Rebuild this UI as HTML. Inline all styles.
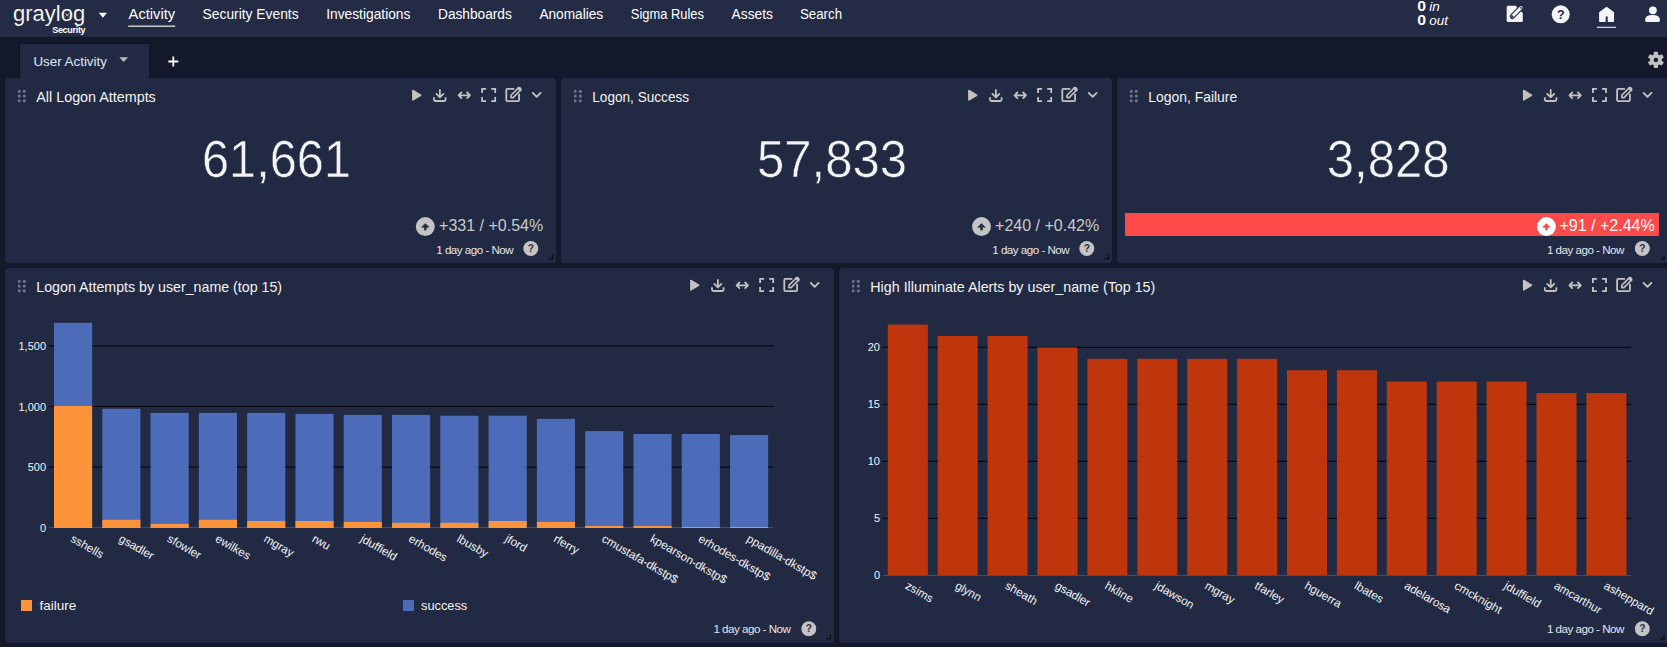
<!DOCTYPE html>
<html><head><meta charset="utf-8">
<style>
*{margin:0;padding:0}
html,body{width:1667px;height:647px;overflow:hidden;background:#13182a;font-family:"Liberation Sans",sans-serif}
svg{position:absolute;left:0;top:0;display:block}
</style></head><body>
<svg width="1667" height="647" viewBox="0 0 1667 647" font-family="Liberation Sans">
<defs>
<symbol id="hdr" viewBox="0 0 146 20" overflow="visible">
<g fill="none" stroke="#c2c2c2" stroke-width="1.8" stroke-linecap="round" stroke-linejoin="round">
<path d="M2.9 6.5 L10.6 11.2 L2.9 15.9 Z" fill="#c2c2c2" stroke-width="1.6"/>
<path d="M29.9 6 V13.2 M26.4 9.9 L29.9 13.4 L33.4 9.9"/>
<path d="M24 13.2 V15.6 Q24 17 25.4 17 H34.2 Q35.6 17 35.6 15.6 V13.2" stroke-linecap="butt"/>
<path d="M48.6 11.3 H60 M51.4 8.5 L48.6 11.3 L51.4 14.1 M57.2 8.5 L60 11.3 L57.2 14.1"/>
<path d="M72.1 9 V4.9 H76.1 M81.2 4.9 H85.2 V9 M85.2 13.1 V17.2 H81.2 M76.1 17.2 H72.1 V13.1" stroke-linecap="butt" stroke-linejoin="miter"/>
<path d="M103.5 4.9 H97.4 Q96.3 4.9 96.3 6 V16.1 Q96.3 17.2 97.4 17.2 H108 Q109.1 17.2 109.1 16.1 V10.5"/>
<path d="M101 13.6 V11.3 L108.2 4.1 Q109.3 3.1 110.3 4.1 Q111.3 5.1 110.3 6.2 L103.2 13.6 Z" stroke-width="1.6"/>
<path d="M108.5 4.1 L110.4 6" stroke-width="2.6"/>
<path d="M122.8 8.9 L126.7 12.8 L130.6 8.9" stroke-width="1.9"/>
</g>
</symbol>
<symbol id="dots" viewBox="0 0 10 14">
<g fill="#6c7288"><circle cx="1.3" cy="1.6" r="1.65"/><circle cx="6.5" cy="1.6" r="1.65"/><circle cx="1.3" cy="6.4" r="1.65"/><circle cx="6.5" cy="6.4" r="1.65"/><circle cx="1.3" cy="11.1" r="1.65"/><circle cx="6.5" cy="11.1" r="1.65"/></g>
</symbol>
<symbol id="help" viewBox="0 0 16 16">
<circle cx="8" cy="8" r="7.5" fill="#c4c4c4"/>
<text x="8" y="11.7" font-size="10.2" font-weight="bold" fill="#2a2f44" text-anchor="middle" font-family="Liberation Sans">?</text>
</symbol>
</defs>
<rect x="0" y="0" width="1667" height="647" fill="#13182a"/>
<rect x="0" y="0" width="1667" height="37" fill="#232b45"/>
<rect x="0" y="37" width="1667" height="1" fill="#131520"/>
<text x="13" y="20.8" font-size="22" fill="#ffffff" text-anchor="start" stroke="#232b45" stroke-width="0.15">graylog</text>
<path d="M66 13.8 L68.4 16.2 M68.4 13.8 L66 16.2" stroke="#e8e8ee" stroke-width="0.8" stroke-linecap="round"/>
<text x="52.2" y="33" font-size="9" fill="#ffffff" text-anchor="start" font-weight="bold" letter-spacing="-0.3">Security</text>
<path d="M98.8 12.8 H107 L102.9 17.8 Z" fill="#ffffff"/>
<text x="128.6" y="19.2" font-size="14" fill="#ffffff" text-anchor="start" textLength="46.6" lengthAdjust="spacingAndGlyphs">Activity</text>
<text x="202.6" y="19.2" font-size="14" fill="#ffffff" text-anchor="start" textLength="96" lengthAdjust="spacingAndGlyphs">Security Events</text>
<text x="326.2" y="19.2" font-size="14" fill="#ffffff" text-anchor="start" textLength="84.2" lengthAdjust="spacingAndGlyphs">Investigations</text>
<text x="438" y="19.2" font-size="14" fill="#ffffff" text-anchor="start" textLength="73.8" lengthAdjust="spacingAndGlyphs">Dashboards</text>
<text x="539.4" y="19.2" font-size="14" fill="#ffffff" text-anchor="start" textLength="63.8" lengthAdjust="spacingAndGlyphs">Anomalies</text>
<text x="630.8" y="19.2" font-size="14" fill="#ffffff" text-anchor="start" textLength="73.2" lengthAdjust="spacingAndGlyphs">Sigma Rules</text>
<text x="731.6" y="19.2" font-size="14" fill="#ffffff" text-anchor="start" textLength="41.4" lengthAdjust="spacingAndGlyphs">Assets</text>
<text x="800" y="19.2" font-size="14" fill="#ffffff" text-anchor="start" textLength="42" lengthAdjust="spacingAndGlyphs">Search</text>
<rect x="128.2" y="25.5" width="47" height="1.4" fill="#d8d8d8"/>
<g transform="translate(1417.3 0) scale(1.12 1)"><text x="0" y="10.9" font-size="14.2" font-weight="bold" fill="#ffffff">0</text><text x="0" y="24.8" font-size="14.2" font-weight="bold" fill="#ffffff">0</text></g>
<text x="1429.2" y="10.9" font-size="13.5" fill="#ffffff" text-anchor="start" font-style="italic">in</text>
<text x="1429.2" y="24.8" font-size="13.5" fill="#ffffff" text-anchor="start" font-style="italic">out</text>
<path d="M1508.2 5.8 H1515.6 L1522.8 13 V20.5 Q1522.8 22 1521.3 22 H1508.2 Q1506.7 22 1506.7 20.5 V7.3 Q1506.7 5.8 1508.2 5.8 Z" fill="#f4f5fa"/>
<path d="M1512.3 16.4 L1521.1 7.6" stroke="#232b45" stroke-width="5.2" stroke-linecap="round"/>
<path d="M1512.3 16.4 L1521.1 7.6" stroke="#f4f5fa" stroke-width="3" stroke-linecap="round"/>
<path d="M1510.9 18.1 L1511.6 14.6 L1514.2 17.3 Z" fill="#232b45"/>
<circle cx="1521" cy="7.8" r="0.9" fill="#232b45"/>
<circle cx="1560.7" cy="14.3" r="9" fill="#f4f5fa"/>
<text x="1560.7" y="18.9" font-size="12.5" fill="#232b45" text-anchor="middle" font-weight="bold">?</text>
<path d="M1606.6 7.7 L1613.3 12.6 V21.2 H1608.5 V15.6 H1604.9 V21.2 H1599.9 V12.6 Z" fill="#f4f5fa" stroke="#f4f5fa" stroke-width="1.6" stroke-linejoin="round"/>
<rect x="1596.9" y="26.7" width="19.1" height="1.3" fill="#d0d0d0"/>
<circle cx="1652.9" cy="10.3" r="3.9" fill="#f4f5fa"/>
<path d="M1645 20.2 Q1645 15 1652.5 15 Q1660 15 1660 20.2 Q1660 22 1658.2 22 H1646.8 Q1645 22 1645 20.2 Z" fill="#f4f5fa"/>
<rect x="19.5" y="43.5" width="130" height="36" fill="#222a43" stroke="#10102a" stroke-width="1"/>
<text x="33.4" y="65.8" font-size="13" fill="#dfe8f6" text-anchor="start" textLength="73.5" lengthAdjust="spacingAndGlyphs">User Activity</text>
<path d="M119.3 57.2 H128 L123.65 62 Z" fill="#b8bcc6"/>
<path d="M173.3 56.5 V66.5 M168.3 61.5 H178.3" stroke="#ffffff" stroke-width="1.8"/>
<g transform="translate(1655.9 59.9)" fill="#c2c2c2"><circle r="5.9"/><rect x="-2.1" y="-8.1" width="4.2" height="4" rx="0.8" transform="rotate(0)"/><rect x="-2.1" y="-8.1" width="4.2" height="4" rx="0.8" transform="rotate(60)"/><rect x="-2.1" y="-8.1" width="4.2" height="4" rx="0.8" transform="rotate(120)"/><rect x="-2.1" y="-8.1" width="4.2" height="4" rx="0.8" transform="rotate(180)"/><rect x="-2.1" y="-8.1" width="4.2" height="4" rx="0.8" transform="rotate(240)"/><rect x="-2.1" y="-8.1" width="4.2" height="4" rx="0.8" transform="rotate(300)"/><circle r="2.2" fill="#13182a"/></g>
<rect x="5" y="78" width="551" height="185" rx="4" fill="#222a43"/>
<text x="36.3" y="102" font-size="14.2" fill="#f2f2f2" text-anchor="start" textLength="119.5" lengthAdjust="spacingAndGlyphs">All Logon Attempts</text>
<rect x="561" y="78" width="551" height="185" rx="4" fill="#222a43"/>
<text x="592.3" y="102" font-size="14.2" fill="#f2f2f2" text-anchor="start" textLength="96.8" lengthAdjust="spacingAndGlyphs">Logon, Success</text>
<rect x="1117" y="78" width="550.5" height="185" rx="4" fill="#222a43"/>
<text x="1148.3" y="102" font-size="14.2" fill="#f2f2f2" text-anchor="start" textLength="88.9" lengthAdjust="spacingAndGlyphs">Logon, Failure</text>
<rect x="5" y="268" width="829" height="375" rx="4" fill="#222a43"/>
<text x="36.3" y="292" font-size="14.2" fill="#f2f2f2" text-anchor="start" textLength="245.8" lengthAdjust="spacingAndGlyphs">Logon Attempts by user_name (top 15)</text>
<rect x="839" y="268" width="828.5" height="375" rx="4" fill="#222a43"/>
<text x="870.3" y="292" font-size="14.2" fill="#f2f2f2" text-anchor="start" textLength="285" lengthAdjust="spacingAndGlyphs">High Illuminate Alerts by user_name (Top 15)</text>
<text x="202" y="177.2" font-size="52.6" fill="#f3f4f8" text-anchor="start" textLength="149.1" lengthAdjust="spacingAndGlyphs" stroke="#222a43" stroke-width="0.6">61,661</text>
<text x="757" y="177.2" font-size="52.6" fill="#f3f4f8" text-anchor="start" textLength="150" lengthAdjust="spacingAndGlyphs" stroke="#222a43" stroke-width="0.6">57,833</text>
<text x="1326.7" y="177.2" font-size="52.6" fill="#f3f4f8" text-anchor="start" textLength="123" lengthAdjust="spacingAndGlyphs" stroke="#222a43" stroke-width="0.6">3,828</text>
<rect x="1125" y="213" width="534" height="23" fill="#ff4a4a"/>
<text x="543.2" y="230.9" font-size="16" fill="#c9c9c9" text-anchor="end" >+331 / +0.54%</text>
<text x="1099.2" y="230.9" font-size="16" fill="#c9c9c9" text-anchor="end" >+240 / +0.42%</text>
<text x="1654.7" y="230.9" font-size="16" fill="#ffffff" text-anchor="end" >+91 / +2.44%</text>
<text x="513.2" y="254" font-size="11.6" fill="#e6e6e6" text-anchor="end" letter-spacing="-0.5">1 day ago - Now</text>
<text x="1069.2" y="254" font-size="11.6" fill="#e6e6e6" text-anchor="end" letter-spacing="-0.5">1 day ago - Now</text>
<text x="1623.9" y="254" font-size="11.6" fill="#e6e6e6" text-anchor="end" letter-spacing="-0.5">1 day ago - Now</text>
<text x="790.4" y="632.6" font-size="11.6" fill="#e6e6e6" text-anchor="end" letter-spacing="-0.5">1 day ago - Now</text>
<text x="1623.9" y="632.6" font-size="11.6" fill="#e6e6e6" text-anchor="end" letter-spacing="-0.5">1 day ago - Now</text>
<use href="#hdr" x="410" y="84" width="146" height="20"/>
<use href="#dots" x="17.8" y="89.7" width="10" height="14"/>
<use href="#help" x="522.8" y="240.5" width="16" height="16"/>
<path d="M548.4 258.9 H552.5 V254.7" fill="none" stroke="#0a0b12" stroke-width="1.2"/>
<use href="#hdr" x="966" y="84" width="146" height="20"/>
<use href="#dots" x="573.8" y="89.7" width="10" height="14"/>
<use href="#help" x="1078.8" y="240.5" width="16" height="16"/>
<path d="M1104.4 258.9 H1108.5 V254.7" fill="none" stroke="#0a0b12" stroke-width="1.2"/>
<use href="#hdr" x="1520.8" y="84" width="146" height="20"/>
<use href="#dots" x="1129.8" y="89.7" width="10" height="14"/>
<use href="#help" x="1634.3" y="240.5" width="16" height="16"/>
<path d="M1659.9 258.9 H1664.0 V254.7" fill="none" stroke="#0a0b12" stroke-width="1.2"/>
<use href="#hdr" x="688" y="274" width="146" height="20"/>
<use href="#dots" x="17.8" y="279.7" width="10" height="14"/>
<use href="#help" x="800.8" y="620.7" width="16" height="16"/>
<path d="M826.4 638.9 H830.5 V634.7" fill="none" stroke="#0a0b12" stroke-width="1.2"/>
<use href="#hdr" x="1520.8" y="274" width="146" height="20"/>
<use href="#dots" x="851.8" y="279.7" width="10" height="14"/>
<use href="#help" x="1634.3" y="620.7" width="16" height="16"/>
<path d="M1659.9 638.9 H1664.0 V634.7" fill="none" stroke="#0a0b12" stroke-width="1.2"/>
<circle cx="425.3" cy="226.6" r="9.5" fill="#c4c4c4"/>
<path d="M421.5 227.2 L425.3 223.5 L429.1 227.2 Z M424.35 226.6 H426.25 V230.1 H424.35 Z" fill="#2a2f44" stroke="#2a2f44" stroke-width="0.6" stroke-linejoin="round"/>
<circle cx="981.5" cy="226.6" r="9.5" fill="#c4c4c4"/>
<path d="M977.7 227.2 L981.5 223.5 L985.3 227.2 Z M980.55 226.6 H982.45 V230.1 H980.55 Z" fill="#2a2f44" stroke="#2a2f44" stroke-width="0.6" stroke-linejoin="round"/>
<circle cx="1546.4" cy="226.6" r="9.5" fill="#ffffff"/>
<path d="M1542.6000000000001 227.2 L1546.4 223.5 L1550.2 227.2 Z M1545.45 226.6 H1547.3500000000001 V230.1 H1545.45 Z" fill="#ff4a4a" stroke="#ff4a4a" stroke-width="0.6" stroke-linejoin="round"/>
<rect x="48.9" y="527" width="724.3" height="1" fill="#4a4c52"/>
<line x1="48.9" y1="467.05" x2="773.2" y2="467.05" stroke="#07070f" stroke-width="1.2"/>
<line x1="48.9" y1="406.50" x2="773.2" y2="406.50" stroke="#07070f" stroke-width="1.2"/>
<line x1="48.9" y1="345.95" x2="773.2" y2="345.95" stroke="#07070f" stroke-width="1.2"/>
<rect x="54.00" y="322.8" width="38.10" height="205.20" fill="#4c6cba"/>
<rect x="54.00" y="406" width="38.10" height="122.00" fill="#fd943c"/>
<text x="69.75" y="540.90" transform="rotate(30 69.75 540.90)" font-size="11.7" fill="#f2f2f2">sshells</text>
<rect x="102.29" y="408.8" width="38.10" height="119.20" fill="#4c6cba"/>
<rect x="102.29" y="519.8" width="38.10" height="8.20" fill="#fd943c"/>
<text x="118.04" y="540.90" transform="rotate(30 118.04 540.90)" font-size="11.7" fill="#f2f2f2">gsadler</text>
<rect x="150.58" y="412.9" width="38.10" height="115.10" fill="#4c6cba"/>
<rect x="150.58" y="523.9" width="38.10" height="4.10" fill="#fd943c"/>
<text x="166.33" y="540.90" transform="rotate(30 166.33 540.90)" font-size="11.7" fill="#f2f2f2">sfowler</text>
<rect x="198.87" y="412.9" width="38.10" height="115.10" fill="#4c6cba"/>
<rect x="198.87" y="519.8" width="38.10" height="8.20" fill="#fd943c"/>
<text x="214.62" y="540.90" transform="rotate(30 214.62 540.90)" font-size="11.7" fill="#f2f2f2">ewilkes</text>
<rect x="247.16" y="412.9" width="38.10" height="115.10" fill="#4c6cba"/>
<rect x="247.16" y="521" width="38.10" height="7.00" fill="#fd943c"/>
<text x="262.91" y="540.90" transform="rotate(30 262.91 540.90)" font-size="11.7" fill="#f2f2f2">mgray</text>
<rect x="295.45" y="413.9" width="38.10" height="114.10" fill="#4c6cba"/>
<rect x="295.45" y="521" width="38.10" height="7.00" fill="#fd943c"/>
<text x="311.20" y="540.90" transform="rotate(30 311.20 540.90)" font-size="11.7" fill="#f2f2f2">rwu</text>
<rect x="343.74" y="414.9" width="38.10" height="113.10" fill="#4c6cba"/>
<rect x="343.74" y="521.9" width="38.10" height="6.10" fill="#fd943c"/>
<text x="359.49" y="540.90" transform="rotate(30 359.49 540.90)" font-size="11.7" fill="#f2f2f2">jduffield</text>
<rect x="392.03" y="414.9" width="38.10" height="113.10" fill="#4c6cba"/>
<rect x="392.03" y="522.8" width="38.10" height="5.20" fill="#fd943c"/>
<text x="407.78" y="540.90" transform="rotate(30 407.78 540.90)" font-size="11.7" fill="#f2f2f2">erhodes</text>
<rect x="440.32" y="415.7" width="38.10" height="112.30" fill="#4c6cba"/>
<rect x="440.32" y="522.8" width="38.10" height="5.20" fill="#fd943c"/>
<text x="456.07" y="540.90" transform="rotate(30 456.07 540.90)" font-size="11.7" fill="#f2f2f2">lbusby</text>
<rect x="488.61" y="415.7" width="38.10" height="112.30" fill="#4c6cba"/>
<rect x="488.61" y="521" width="38.10" height="7.00" fill="#fd943c"/>
<text x="504.36" y="540.90" transform="rotate(30 504.36 540.90)" font-size="11.7" fill="#f2f2f2">jford</text>
<rect x="536.90" y="418.9" width="38.10" height="109.10" fill="#4c6cba"/>
<rect x="536.90" y="521.9" width="38.10" height="6.10" fill="#fd943c"/>
<text x="552.65" y="540.90" transform="rotate(30 552.65 540.90)" font-size="11.7" fill="#f2f2f2">rferry</text>
<rect x="585.19" y="431.1" width="38.10" height="96.90" fill="#4c6cba"/>
<rect x="585.19" y="526" width="38.10" height="2.00" fill="#fd943c"/>
<text x="600.94" y="540.90" transform="rotate(30 600.94 540.90)" font-size="11.7" fill="#f2f2f2">cmustafa-dkstp$</text>
<rect x="633.48" y="434" width="38.10" height="94.00" fill="#4c6cba"/>
<rect x="633.48" y="526" width="38.10" height="2.00" fill="#fd943c"/>
<text x="649.23" y="540.90" transform="rotate(30 649.23 540.90)" font-size="11.7" fill="#f2f2f2">kpearson-dkstp$</text>
<rect x="681.77" y="434" width="38.10" height="94.00" fill="#4c6cba"/>
<rect x="681.77" y="527.1" width="38.10" height="0.90" fill="#fd943c"/>
<text x="697.52" y="540.90" transform="rotate(30 697.52 540.90)" font-size="11.7" fill="#f2f2f2">erhodes-dkstp$</text>
<rect x="730.06" y="435.1" width="38.10" height="92.90" fill="#4c6cba"/>
<rect x="730.06" y="527.1" width="38.10" height="0.90" fill="#fd943c"/>
<text x="745.81" y="540.90" transform="rotate(30 745.81 540.90)" font-size="11.7" fill="#f2f2f2">ppadilla-dkstp$</text>
<text x="46" y="531.60" font-size="11" fill="#f2f2f2" text-anchor="end" >0</text>
<text x="46" y="471.05" font-size="11" fill="#f2f2f2" text-anchor="end" >500</text>
<text x="46" y="410.50" font-size="11" fill="#f2f2f2" text-anchor="end" >1,000</text>
<text x="46" y="349.95" font-size="11" fill="#f2f2f2" text-anchor="end" >1,500</text>
<rect x="21" y="600" width="11" height="11" fill="#fd943c"/>
<text x="39.5" y="610" font-size="13.5" fill="#f2f2f2" text-anchor="start" >failure</text>
<rect x="403" y="600" width="11" height="11" fill="#4c6cba"/>
<text x="421" y="610" font-size="12.8" fill="#f2f2f2" text-anchor="start" >success</text>
<rect x="882.9" y="575" width="748.3" height="1" fill="#4a4c52"/>
<line x1="882.9" y1="518.40" x2="1631.2" y2="518.40" stroke="#07070f" stroke-width="1.2"/>
<line x1="882.9" y1="461.40" x2="1631.2" y2="461.40" stroke="#07070f" stroke-width="1.2"/>
<line x1="882.9" y1="404.40" x2="1631.2" y2="404.40" stroke="#07070f" stroke-width="1.2"/>
<line x1="882.9" y1="347.40" x2="1631.2" y2="347.40" stroke="#07070f" stroke-width="1.2"/>
<rect x="887.80" y="324.60" width="40.00" height="250.40" fill="#bf360c"/>
<text x="904.50" y="587.90" transform="rotate(30 904.50 587.90)" font-size="11.7" fill="#f2f2f2">zsims</text>
<rect x="937.70" y="336.00" width="40.00" height="239.00" fill="#bf360c"/>
<text x="954.40" y="587.90" transform="rotate(30 954.40 587.90)" font-size="11.7" fill="#f2f2f2">glynn</text>
<rect x="987.60" y="336.00" width="40.00" height="239.00" fill="#bf360c"/>
<text x="1004.30" y="587.90" transform="rotate(30 1004.30 587.90)" font-size="11.7" fill="#f2f2f2">sheath</text>
<rect x="1037.50" y="347.40" width="40.00" height="227.60" fill="#bf360c"/>
<text x="1054.20" y="587.90" transform="rotate(30 1054.20 587.90)" font-size="11.7" fill="#f2f2f2">gsadler</text>
<rect x="1087.40" y="358.80" width="40.00" height="216.20" fill="#bf360c"/>
<text x="1104.10" y="587.90" transform="rotate(30 1104.10 587.90)" font-size="11.7" fill="#f2f2f2">hkline</text>
<rect x="1137.30" y="358.80" width="40.00" height="216.20" fill="#bf360c"/>
<text x="1154.00" y="587.90" transform="rotate(30 1154.00 587.90)" font-size="11.7" fill="#f2f2f2">jdawson</text>
<rect x="1187.20" y="358.80" width="40.00" height="216.20" fill="#bf360c"/>
<text x="1203.90" y="587.90" transform="rotate(30 1203.90 587.90)" font-size="11.7" fill="#f2f2f2">mgray</text>
<rect x="1237.10" y="358.80" width="40.00" height="216.20" fill="#bf360c"/>
<text x="1253.80" y="587.90" transform="rotate(30 1253.80 587.90)" font-size="11.7" fill="#f2f2f2">tfarley</text>
<rect x="1287.00" y="370.20" width="40.00" height="204.80" fill="#bf360c"/>
<text x="1303.70" y="587.90" transform="rotate(30 1303.70 587.90)" font-size="11.7" fill="#f2f2f2">hguerra</text>
<rect x="1336.90" y="370.20" width="40.00" height="204.80" fill="#bf360c"/>
<text x="1353.60" y="587.90" transform="rotate(30 1353.60 587.90)" font-size="11.7" fill="#f2f2f2">lbates</text>
<rect x="1386.80" y="381.60" width="40.00" height="193.40" fill="#bf360c"/>
<text x="1403.50" y="587.90" transform="rotate(30 1403.50 587.90)" font-size="11.7" fill="#f2f2f2">adelarosa</text>
<rect x="1436.70" y="381.60" width="40.00" height="193.40" fill="#bf360c"/>
<text x="1453.40" y="587.90" transform="rotate(30 1453.40 587.90)" font-size="11.7" fill="#f2f2f2">cmcknight</text>
<rect x="1486.60" y="381.60" width="40.00" height="193.40" fill="#bf360c"/>
<text x="1503.30" y="587.90" transform="rotate(30 1503.30 587.90)" font-size="11.7" fill="#f2f2f2">jduffield</text>
<rect x="1536.50" y="393.00" width="40.00" height="182.00" fill="#bf360c"/>
<text x="1553.20" y="587.90" transform="rotate(30 1553.20 587.90)" font-size="11.7" fill="#f2f2f2">amcarthur</text>
<rect x="1586.40" y="393.00" width="40.00" height="182.00" fill="#bf360c"/>
<text x="1603.10" y="587.90" transform="rotate(30 1603.10 587.90)" font-size="11.7" fill="#f2f2f2">asheppard</text>
<text x="880" y="579.40" font-size="11" fill="#f2f2f2" text-anchor="end" >0</text>
<text x="880" y="522.40" font-size="11" fill="#f2f2f2" text-anchor="end" >5</text>
<text x="880" y="465.40" font-size="11" fill="#f2f2f2" text-anchor="end" >10</text>
<text x="880" y="408.40" font-size="11" fill="#f2f2f2" text-anchor="end" >15</text>
<text x="880" y="351.40" font-size="11" fill="#f2f2f2" text-anchor="end" >20</text>
</svg>
</body></html>
